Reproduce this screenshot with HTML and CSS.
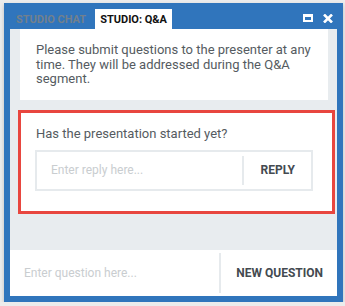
FILE: index.html
```html
<!DOCTYPE html>
<html lang="en">
<head>
  <meta charset="UTF-8" />
  <meta name="viewport" content="width=device-width, initial-scale=1.0"/>
  <title>Studio Q&amp;A</title>
  <link rel="stylesheet" href="styles.css">
</head>
<body>
  <div class="window">
    <div class="window-header">
      <div class="tab">STUDIO CHAT</div>
      <div class="tab active">STUDIO: Q&amp;A</div>
      <div class="window-controls">
        <span class="icon-max"></span>
        <svg class="icon-close" width="10" height="9" viewBox="0 0 10 9">
          <path d="M1 0.5 L9 8.5 M9 0.5 L1 8.5" stroke="#fff" stroke-width="2.6" fill="none"/>
        </svg>
      </div>
    </div>

    <div class="window-body">
      <div class="card intro">
        Please submit questions to the presenter at any time. They will be addressed during the Q&amp;A segment.
      </div>

      <!-- Question with reply box -->
      <div class="card question">
        <p>Has the presentation started yet?</p>
        <div class="reply-box">
          <input type="text" placeholder="Enter reply here..." />
          <button>REPLY</button>
        </div>
      </div>

      <div class="spacer"></div>

      <div class="ask-bar">
        <input type="text" placeholder="Enter question here..." />
        <button>NEW QUESTION</button>
      </div>
    </div>
  </div>
</body>
</html>
```

FILE: styles.css
```css
body {
  margin: 0;
  padding: 0;
  background: #ececec;
  font-family: Roboto, 'Liberation Sans', sans-serif;
}

.window {
  margin: 3px 0 0 4px;
  width: 339px;
  height: 299px;
  box-sizing: border-box;
  background: #3075bc;
  padding: 0 6px 6px 6px;
  display: flex;
  flex-direction: column;
  box-shadow: 0 2px 4px rgba(0, 0, 0, 0.2);
}

.window-header {
  height: 26px;
  display: flex;
  align-items: flex-end;
}

.tab {
  height: 20px;
  line-height: 21px;
  font-size: 11px;
  font-weight: bold;
  color: #72808d;
  padding: 0 9px 0 6px;
}

.tab.active {
  background: #fff;
  color: #111;
  padding: 0 5px;
}

.window-controls {
  margin-left: auto;
  display: flex;
  align-items: center;
  gap: 10px;
  height: 26px;
  padding-right: 4px;
  padding-top: 4px;
  box-sizing: border-box;
}

.icon-max {
  width: 10px;
  height: 8px;
  box-sizing: border-box;
  border: 2px solid #fff;
  border-top-width: 3px;
}

.window-body {
  flex: 1;
  background: #e8ecef;
  display: flex;
  flex-direction: column;
}

.card {
  background: #fff;
  margin: 0 9px 0 10px;
  font-size: 13px;
  color: #555b61;
}

.intro {
  padding: 14px 16px 13px;
  line-height: 14.5px;
}

.question {
  margin: 10px 2px 0 8px;
  border: 3px solid #e8463f;
  padding: 13px 19px 20px 14px;
}

.question p {
  margin: 0 0 9px 1px;
  line-height: 15px;
}

.reply-box {
  display: flex;
  height: 41px;
  box-sizing: border-box;
  border: 2px solid #e6eaed;
}

input[type="text"] {
  flex: 1;
  min-width: 0;
  border: none;
  outline: none;
  padding: 0 14px;
  font-family: Roboto, 'Liberation Sans', sans-serif;
  font-size: 12px;
  color: #555;
  background: transparent;
}

input::placeholder {
  color: #c9cdd0;
}

button {
  border: none;
  background: transparent;
  border-left: 2px solid #e6eaed;
  margin: 4px 0;
  padding: 0 16px;
  font-family: Roboto, 'Liberation Sans', sans-serif;
  font-size: 12px;
  font-weight: bold;
  color: #444a50;
  cursor: pointer;
}

.spacer {
  flex: 1;
}

.ask-bar {
  height: 46px;
  background: #fff;
  display: flex;
}

.ask-bar button {
  margin: 3px 0;
  padding: 0 14px 0 15px;
}
```
